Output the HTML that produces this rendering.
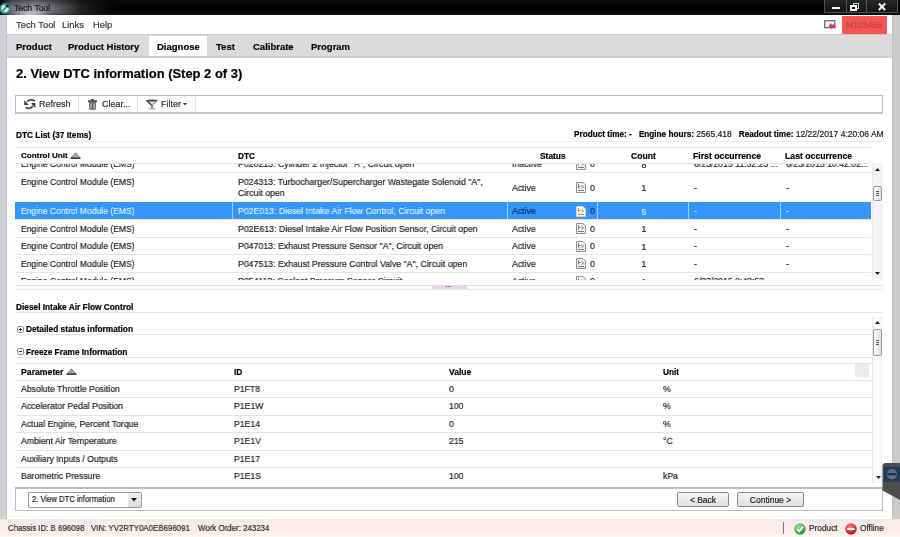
<!DOCTYPE html>
<html><head><meta charset="utf-8">
<style>
*{margin:0;padding:0;box-sizing:border-box}
html,body{width:900px;height:537px;overflow:hidden;background:#fff;font-family:"Liberation Sans",sans-serif;color:#222}
.a{position:absolute}
.t{position:absolute;white-space:nowrap;line-height:1;will-change:transform;-webkit-text-stroke:0.2px currentColor}
svg{position:absolute;overflow:visible}
</style></head><body>
<div class="a" style="left:0px;top:0px;width:900px;height:15px;background:linear-gradient(#0c0c0c,#000 60%,#111)"></div>
<div class="a" style="left:0px;top:0px;width:115px;height:15px;background:linear-gradient(90deg,rgba(0,0,0,0) 0,rgba(125,125,130,.9) 10%,rgba(160,160,165,.95) 30%,rgba(120,120,125,.85) 47%,rgba(50,50,50,.55) 72%,rgba(0,0,0,0) 100%)"></div>
<div class="a" style="left:0px;top:0px;width:115px;height:15px;background:linear-gradient(rgba(0,0,0,.45),rgba(0,0,0,0) 45%,rgba(0,0,0,0) 80%,rgba(0,0,0,.3))"></div>
<div class="a" style="left:10px;top:8px;width:40px;height:7px;background:radial-gradient(ellipse 20px 5px at 20px 6px,rgba(220,230,255,.7),rgba(0,0,0,0))"></div>
<div class="t" style="left:13.5px;top:3.72px;font-size:8.6px;color:#161616;">Tech Tool</div>
<svg style="left:0;top:1.5px" width="12" height="13" viewBox="0 0 12 13"><circle cx="5" cy="6.5" r="5.6" fill="#2a8d86"/><circle cx="5" cy="6.5" r="3.8" fill="#cfeeea"/><path d="M2 9.5 L7 4" stroke="#2a8d86" stroke-width="1.6"/><path d="M5 3 L8.5 3 L8.5 6.5 Z" fill="#0a1515"/></svg>
<div class="a" style="left:824px;top:0px;width:74px;height:13px;background:linear-gradient(#262626,#151515);border:1px solid #505050;border-top:none"></div>
<div class="a" style="left:845.5px;top:0px;width:1px;height:12px;background:#555"></div>
<div class="a" style="left:865.5px;top:0px;width:1px;height:12px;background:#555"></div>
<div class="a" style="left:832px;top:6.5px;width:8px;height:2.5px;background:#f2f2f2"></div>
<div class="a" style="left:852.5px;top:2.5px;width:6px;height:6px;border:1.2px solid #d8d8d8"></div>
<div class="a" style="left:850px;top:4.5px;width:6.5px;height:6px;background:#f4f4f4"></div>
<div class="a" style="left:852px;top:6.5px;width:2.5px;height:2px;background:#111"></div>
<svg style="left:877.5px;top:2.5px" width="8" height="7.5" viewBox="0 0 8 7.5"><path d="M0.8 0.5 L7.2 7 M7.2 0.5 L0.8 7" stroke="#f2f2f2" stroke-width="2"/></svg>
<div class="a" style="left:0px;top:15px;width:7px;height:504px;background:linear-gradient(90deg,#cbd0d4,#cfd1d3 70%);border-right:1px solid #c6c4c4"></div>
<div class="a" style="left:892px;top:15px;width:8px;height:504px;background:#cbcbcb;border-left:1px solid #c0c0c0"></div>
<div class="t" style="left:15.5px;top:20.34px;font-size:9.4px;color:#3a3a3a;">Tech Tool</div>
<div class="t" style="left:62px;top:20.34px;font-size:9.4px;color:#3a3a3a;">Links</div>
<div class="t" style="left:93px;top:20.34px;font-size:9.4px;color:#3a3a3a;">Help</div>
<svg style="left:824px;top:20px" width="13" height="10" viewBox="0 0 13 10"><rect x="0.7" y="0.7" width="10" height="7" fill="#f4f6f4" stroke="#6e7470" stroke-width="1.3"/><path d="M4.5 6 L7.5 3 L7.5 4.5 L11.5 4.5 L11.5 8 L7.5 8 L7.5 9.5 Z" fill="#d63a4a"/></svg>
<div class="a" style="left:842px;top:16px;width:45px;height:18px;background:#f65555"></div>
<div class="t" style="left:846px;top:21.22px;font-size:8.6px;color:#b84444;">M123456</div>
<div class="a" style="left:7px;top:33.8px;width:885px;height:24px;background:#dbdbdb;border-top:1.5px solid #c8c8c8;border-bottom:2px solid #d3d3d3"></div>
<div class="a" style="left:149px;top:35.8px;width:58px;height:20.4px;background:#fff"></div>
<div class="t" style="left:15.5px;top:41.96px;font-size:9.5px;font-weight:bold;color:#050505;">Product</div>
<div class="t" style="left:67.5px;top:41.96px;font-size:9.5px;font-weight:bold;color:#050505;">Product History</div>
<div class="t" style="left:157px;top:41.96px;font-size:9.5px;font-weight:bold;color:#050505;">Diagnose</div>
<div class="t" style="left:216px;top:41.96px;font-size:9.5px;font-weight:bold;color:#050505;">Test</div>
<div class="t" style="left:252.5px;top:41.96px;font-size:9.5px;font-weight:bold;color:#050505;">Calibrate</div>
<div class="t" style="left:311px;top:41.96px;font-size:9.5px;font-weight:bold;color:#050505;">Program</div>
<div class="t" style="left:15.5px;top:68.04px;font-size:12.95px;font-weight:bold;color:#050505;">2. View DTC information (Step 2 of 3)</div>
<div class="a" style="left:15px;top:95px;width:868px;height:19px;border:1px solid #bdbdbd;border-bottom:2px solid #c6c6c6"></div>
<div class="a" style="left:78px;top:96px;width:1px;height:16px;background:#e6e6e6"></div>
<div class="a" style="left:137px;top:96px;width:1px;height:16px;background:#e6e6e6"></div>
<div class="a" style="left:195px;top:96px;width:1px;height:16px;background:#e6e6e6"></div>
<div class="t" style="left:39px;top:99.88px;font-size:9px;color:#333;">Refresh</div>
<div class="t" style="left:102px;top:99.88px;font-size:9px;color:#333;">Clear...</div>
<div class="t" style="left:160.5px;top:99.88px;font-size:9px;color:#333;">Filter</div>
<svg style="left:23px;top:98px" width="14" height="12" viewBox="0 0 14 12"><path d="M4 3.6 Q7.5 0.6 11.8 3" stroke="#444" stroke-width="1.7" fill="none"/><path d="M1.2 2.2 L1.2 7 L5.8 7 Z" fill="#3a3a3a"/><path d="M2.6 9.3 Q6.5 11.8 10 8.2" stroke="#444" stroke-width="1.7" fill="none"/><path d="M8 5 L12.3 5 L12.3 10 Z" fill="#3a3a3a"/></svg>
<svg style="left:88px;top:99px" width="9" height="11" viewBox="0 0 9 11"><rect x="3" y="0" width="3" height="1.5" fill="#555"/><rect x="0" y="1.3" width="9" height="2" rx="0.5" fill="#4a4a4a"/><path d="M1 3.3 H8 L7.7 10.7 H1.3 Z" fill="#5c5c5c"/><rect x="2.3" y="4.3" width="1.3" height="5.3" fill="#c4c4c4"/><rect x="5.4" y="4.3" width="1.3" height="5.3" fill="#c4c4c4"/></svg>
<svg style="left:146px;top:99px" width="12" height="11" viewBox="0 0 12 11"><path d="M0.5 1.5 L5.4 6 V9.5 H6.6 V6 L11.5 1.5 Z" fill="#d4d4d4" stroke="#6a6a6a" stroke-width="0.8"/><path d="M0.5 1.5 L5.4 6" stroke="#3a3a3a" stroke-width="1.3"/><ellipse cx="6" cy="1.5" rx="5.3" ry="1.1" fill="#4a4a4a"/><rect x="2.5" y="9.3" width="7" height="1.2" fill="#b0b0b0"/></svg>
<svg style="left:182.5px;top:102.5px" width="4" height="3" viewBox="0 0 4 3"><path d="M0 0 H4 L2 2.5 Z" fill="#333"/></svg>
<div class="t" style="left:16px;top:130.67px;font-size:8.3px;font-weight:bold;color:#050505;">DTC List (37 Items)</div>
<div class="t" style="right:16.5px;top:129.5px;font-size:8.5px;color:#222;word-spacing:0"><b style="font-size:8.2px;color:#050505">Product time: -</b>&nbsp;&nbsp;&nbsp;<b style="font-size:8.2px;color:#050505">Engine hours:</b> 2565.418&nbsp;&nbsp;&nbsp;<b style="font-size:8.2px;color:#050505">Readout time:</b> 12/22/2017 4:20:06 AM</div>
<div class="a" style="left:16px;top:141px;width:867px;height:1px;background:#ececec"></div>
<div class="a" style="left:16px;top:147px;width:855px;height:1px;background:#e2e2e2"></div>
<div class="t" style="left:20.5px;top:152.14px;font-size:8.1px;font-weight:bold;color:#050505;">Control Unit</div>
<div class="t" style="left:238px;top:151.97px;font-size:8.3px;font-weight:bold;color:#050505;">DTC</div>
<div class="t" style="left:539.5px;top:151.89px;font-size:8.4px;font-weight:bold;color:#050505;">Status</div>
<div class="t" style="left:630.5px;top:151.72px;font-size:8.6px;font-weight:bold;color:#050505;">Count</div>
<div class="t" style="left:693px;top:151.64px;font-size:8.7px;font-weight:bold;color:#050505;">First occurrence</div>
<div class="t" style="left:785px;top:151.64px;font-size:8.7px;font-weight:bold;color:#050505;">Last occurrence</div>
<svg style="left:69.5px;top:152px" width="11" height="7" viewBox="0 0 11 7"><path d="M1 6 L5.5 0.8 L10 6 Z" fill="#a8a8a8" stroke="#6a6a6a" stroke-width="0.8"/><path d="M0.5 6.2 H10.5" stroke="#222" stroke-width="1.2"/></svg>
<div class="a" style="left:0;top:163px;width:871px;height:117px;overflow:hidden">
<div class="a" style="left:15px;top:9px;width:856px;height:1px;background:#e6e6e6"></div>
<div class="a" style="left:15px;top:39px;width:856px;height:1px;background:#e6e6e6"></div>
<div class="a" style="left:15px;top:56px;width:856px;height:1px;background:#e6e6e6"></div>
<div class="a" style="left:15px;top:74px;width:856px;height:1px;background:#e6e6e6"></div>
<div class="a" style="left:15px;top:91px;width:856px;height:1px;background:#e6e6e6"></div>
<div class="a" style="left:15px;top:109px;width:856px;height:1px;background:#e6e6e6"></div>
<div class="a" style="left:15px;top:39px;width:856px;height:17px;background:#3596f8"></div>
<div class="a" style="left:232px;top:39px;width:1px;height:17px;background:#a6cdf5"></div>
<div class="a" style="left:507px;top:39px;width:1px;height:17px;background:#a6cdf5"></div>
<div class="a" style="left:597px;top:39px;width:1px;height:17px;background:#a6cdf5"></div>
<div class="a" style="left:688px;top:39px;width:1px;height:17px;background:#a6cdf5"></div>
<div class="a" style="left:780px;top:39px;width:1px;height:17px;background:#a6cdf5"></div>
<div class="t" style="left:20.5px;top:-2.87px;font-size:9.3px;color:#222;transform:scaleX(0.9194);transform-origin:0 0;">Engine Control Module (EMS)</div>
<div class="t" style="left:238px;top:-2.87px;font-size:9.3px;color:#222;transform:scaleX(0.9409);transform-origin:0 0;">P020213: Cylinder 2 Injector "A", Circuit open</div>
<div class="t" style="left:512px;top:-2.87px;font-size:9.3px;color:#222;transform:scaleX(0.9355);transform-origin:0 0;">Inactive</div>
<svg style="left:576px;top:-4.5px" width="10" height="11" viewBox="0 0 10 11"><path d="M0.5 0.5 H7 L9.5 3 V10.5 H0.5 Z" fill="#f4f4f4" stroke="#8e8e8e"/><path d="M2.5 2 V6.5 M2.5 4.5 H4.5 M5.5 3.5 L7.5 5 L5.5 6.5 M2 8.5 H8" stroke="#7a7a7a" stroke-width="1" fill="none"/></svg>
<div class="t" style="left:590px;top:-2.87px;font-size:9.3px;color:#222;transform:scaleX(0.9355);transform-origin:0 0;">0</div>
<div class="t" style="left:624px;width:40px;text-align:center;top:-2.36px;font-size:8.7px;color:#222">8</div>
<div class="t" style="left:694px;top:-2.87px;font-size:9.3px;color:#222;transform:scaleX(0.9355);transform-origin:0 0;">6/23/2015 11:52:23 ...</div>
<div class="t" style="left:786px;top:-2.87px;font-size:9.3px;color:#222;transform:scaleX(0.9355);transform-origin:0 0;">6/23/2015 10:42:02...</div>
<div class="t" style="left:20.5px;top:14.93px;font-size:9.3px;color:#222;transform:scaleX(0.9194);transform-origin:0 0;">Engine Control Module (EMS)</div>
<div class="t" style="left:238px;top:14.93px;font-size:9.3px;color:#222;transform:scaleX(0.9409);transform-origin:0 0;">P024313: Turbocharger/Supercharger Wastegate Solenoid "A",</div>
<div class="t" style="left:238px;top:25.93px;font-size:9.3px;color:#222;transform:scaleX(0.9409);transform-origin:0 0;">Circuit open</div>
<div class="t" style="left:512px;top:20.93px;font-size:9.3px;color:#222;transform:scaleX(0.9355);transform-origin:0 0;">Active</div>
<svg style="left:576px;top:19.30000000000001px" width="10" height="11" viewBox="0 0 10 11"><path d="M0.5 0.5 H7 L9.5 3 V10.5 H0.5 Z" fill="#f4f4f4" stroke="#8e8e8e"/><path d="M2.5 2 V6.5 M2.5 4.5 H4.5 M5.5 3.5 L7.5 5 L5.5 6.5 M2 8.5 H8" stroke="#7a7a7a" stroke-width="1" fill="none"/></svg>
<div class="t" style="left:590px;top:20.93px;font-size:9.3px;color:#222;transform:scaleX(0.9355);transform-origin:0 0;">0</div>
<div class="t" style="left:624px;width:40px;text-align:center;top:21.44px;font-size:8.7px;color:#222">1</div>
<div class="t" style="left:694px;top:20.93px;font-size:9.3px;color:#222;transform:scaleX(0.9355);transform-origin:0 0;">-</div>
<div class="t" style="left:786px;top:20.93px;font-size:9.3px;color:#222;transform:scaleX(0.9355);transform-origin:0 0;">-</div>
<div class="t" style="left:20.5px;top:44.13px;font-size:9.3px;color:#d6e9ff;transform:scaleX(0.9194);transform-origin:0 0;">Engine Control Module (EMS)</div>
<div class="t" style="left:238px;top:44.13px;font-size:9.3px;color:#d6e9ff;transform:scaleX(0.9409);transform-origin:0 0;">P02E013: Diesel Intake Air Flow Control, Circuit open</div>
<div class="t" style="left:512px;top:44.13px;font-size:9.3px;color:#0b2c6e;transform:scaleX(0.9355);transform-origin:0 0;">Active</div>
<svg style="left:576px;top:42.5px" width="10" height="11" viewBox="0 0 10 11"><path d="M0.5 0.5 H7 L9.5 3 V10.5 H0.5 Z" fill="#fbfbfb" stroke="#d0d0d0"/><path d="M2.5 2 V6.5 M2.5 4.5 H4.5 M5.5 3.5 L7.5 5 L5.5 6.5 M2 8.5 H8" stroke="#d08a50" stroke-width="1" fill="none"/></svg>
<div class="t" style="left:590px;top:44.13px;font-size:9.3px;color:#0b2c6e;transform:scaleX(0.9355);transform-origin:0 0;">0</div>
<div class="t" style="left:624px;width:40px;text-align:center;top:44.64px;font-size:8.7px;color:#d6e9ff">5</div>
<div class="t" style="left:694px;top:44.13px;font-size:9.3px;color:#d6e9ff;transform:scaleX(0.9355);transform-origin:0 0;">-</div>
<div class="t" style="left:786px;top:44.13px;font-size:9.3px;color:#d6e9ff;transform:scaleX(0.9355);transform-origin:0 0;">-</div>
<div class="t" style="left:20.5px;top:61.63px;font-size:9.3px;color:#222;transform:scaleX(0.9194);transform-origin:0 0;">Engine Control Module (EMS)</div>
<div class="t" style="left:238px;top:61.63px;font-size:9.3px;color:#222;transform:scaleX(0.9409);transform-origin:0 0;">P02E613: Diesel Intake Air Flow Position Sensor, Circuit open</div>
<div class="t" style="left:512px;top:61.63px;font-size:9.3px;color:#222;transform:scaleX(0.9355);transform-origin:0 0;">Active</div>
<svg style="left:576px;top:60.0px" width="10" height="11" viewBox="0 0 10 11"><path d="M0.5 0.5 H7 L9.5 3 V10.5 H0.5 Z" fill="#f4f4f4" stroke="#8e8e8e"/><path d="M2.5 2 V6.5 M2.5 4.5 H4.5 M5.5 3.5 L7.5 5 L5.5 6.5 M2 8.5 H8" stroke="#7a7a7a" stroke-width="1" fill="none"/></svg>
<div class="t" style="left:590px;top:61.63px;font-size:9.3px;color:#222;transform:scaleX(0.9355);transform-origin:0 0;">0</div>
<div class="t" style="left:624px;width:40px;text-align:center;top:62.14px;font-size:8.7px;color:#222">1</div>
<div class="t" style="left:694px;top:61.63px;font-size:9.3px;color:#222;transform:scaleX(0.9355);transform-origin:0 0;">-</div>
<div class="t" style="left:786px;top:61.63px;font-size:9.3px;color:#222;transform:scaleX(0.9355);transform-origin:0 0;">-</div>
<div class="t" style="left:20.5px;top:79.23px;font-size:9.3px;color:#222;transform:scaleX(0.9194);transform-origin:0 0;">Engine Control Module (EMS)</div>
<div class="t" style="left:238px;top:79.23px;font-size:9.3px;color:#222;transform:scaleX(0.9409);transform-origin:0 0;">P047013: Exhaust Pressure Sensor "A", Circuit open</div>
<div class="t" style="left:512px;top:79.23px;font-size:9.3px;color:#222;transform:scaleX(0.9355);transform-origin:0 0;">Active</div>
<svg style="left:576px;top:77.6px" width="10" height="11" viewBox="0 0 10 11"><path d="M0.5 0.5 H7 L9.5 3 V10.5 H0.5 Z" fill="#f4f4f4" stroke="#8e8e8e"/><path d="M2.5 2 V6.5 M2.5 4.5 H4.5 M5.5 3.5 L7.5 5 L5.5 6.5 M2 8.5 H8" stroke="#7a7a7a" stroke-width="1" fill="none"/></svg>
<div class="t" style="left:590px;top:79.23px;font-size:9.3px;color:#222;transform:scaleX(0.9355);transform-origin:0 0;">0</div>
<div class="t" style="left:624px;width:40px;text-align:center;top:79.74px;font-size:8.7px;color:#222">1</div>
<div class="t" style="left:694px;top:79.23px;font-size:9.3px;color:#222;transform:scaleX(0.9355);transform-origin:0 0;">-</div>
<div class="t" style="left:786px;top:79.23px;font-size:9.3px;color:#222;transform:scaleX(0.9355);transform-origin:0 0;">-</div>
<div class="t" style="left:20.5px;top:96.83px;font-size:9.3px;color:#222;transform:scaleX(0.9194);transform-origin:0 0;">Engine Control Module (EMS)</div>
<div class="t" style="left:238px;top:96.83px;font-size:9.3px;color:#222;transform:scaleX(0.9409);transform-origin:0 0;">P047513: Exhaust Pressure Control Valve "A", Circuit open</div>
<div class="t" style="left:512px;top:96.83px;font-size:9.3px;color:#222;transform:scaleX(0.9355);transform-origin:0 0;">Active</div>
<svg style="left:576px;top:95.19999999999999px" width="10" height="11" viewBox="0 0 10 11"><path d="M0.5 0.5 H7 L9.5 3 V10.5 H0.5 Z" fill="#f4f4f4" stroke="#8e8e8e"/><path d="M2.5 2 V6.5 M2.5 4.5 H4.5 M5.5 3.5 L7.5 5 L5.5 6.5 M2 8.5 H8" stroke="#7a7a7a" stroke-width="1" fill="none"/></svg>
<div class="t" style="left:590px;top:96.83px;font-size:9.3px;color:#222;transform:scaleX(0.9355);transform-origin:0 0;">0</div>
<div class="t" style="left:624px;width:40px;text-align:center;top:97.34px;font-size:8.7px;color:#222">1</div>
<div class="t" style="left:694px;top:96.83px;font-size:9.3px;color:#222;transform:scaleX(0.9355);transform-origin:0 0;">-</div>
<div class="t" style="left:786px;top:96.83px;font-size:9.3px;color:#222;transform:scaleX(0.9355);transform-origin:0 0;">-</div>
<div class="t" style="left:20.5px;top:114.43px;font-size:9.3px;color:#222;transform:scaleX(0.9194);transform-origin:0 0;">Engine Control Module (EMS)</div>
<div class="t" style="left:238px;top:114.43px;font-size:9.3px;color:#222;transform:scaleX(0.9409);transform-origin:0 0;">P054113: Coolant Pressure Sensor Circuit</div>
<div class="t" style="left:512px;top:114.43px;font-size:9.3px;color:#222;transform:scaleX(0.9355);transform-origin:0 0;">Active</div>
<svg style="left:576px;top:112.80000000000001px" width="10" height="11" viewBox="0 0 10 11"><path d="M0.5 0.5 H7 L9.5 3 V10.5 H0.5 Z" fill="#f4f4f4" stroke="#8e8e8e"/><path d="M2.5 2 V6.5 M2.5 4.5 H4.5 M5.5 3.5 L7.5 5 L5.5 6.5 M2 8.5 H8" stroke="#7a7a7a" stroke-width="1" fill="none"/></svg>
<div class="t" style="left:590px;top:114.43px;font-size:9.3px;color:#222;transform:scaleX(0.9355);transform-origin:0 0;">0</div>
<div class="t" style="left:624px;width:40px;text-align:center;top:114.94px;font-size:8.7px;color:#222">1</div>
<div class="t" style="left:694px;top:114.43px;font-size:9.3px;color:#222;transform:scaleX(0.9355);transform-origin:0 0;">6/23/2015 9:42:53</div>
<div class="t" style="left:786px;top:114.43px;font-size:9.3px;color:#222;transform:scaleX(0.9355);transform-origin:0 0;"></div>
</div>
<div class="a" style="left:15px;top:162.5px;width:856px;height:1.5px;background:#fff"></div>
<div class="a" style="left:15px;top:163px;width:856px;height:1px;background:#e2e2e2"></div>
<div class="a" style="left:872px;top:163px;width:11px;height:117px;background:#f4f4f4;border-left:1px solid #e8e8e8"></div>
<svg style="left:875px;top:168px" width="5" height="3" viewBox="0 0 5 3"><path d="M0 3 L2.5 0 L5 3 Z" fill="#222"/></svg>
<div class="a" style="left:873px;top:186px;width:9px;height:15px;background:linear-gradient(90deg,#fafafa,#e0e0e0);border:1px solid #999;border-radius:2px"></div>
<div class="a" style="left:876px;top:191px;width:3px;height:1px;background:#555;box-shadow:0 2px 0 #555,0 4px 0 #555"></div>
<svg style="left:875px;top:272px" width="5" height="3" viewBox="0 0 5 3"><path d="M0 0 L2.5 3 L5 0 Z" fill="#222"/></svg>
<div class="a" style="left:15px;top:285px;width:868px;height:1px;background:#e2e2e2"></div>
<div class="a" style="left:15px;top:289px;width:868px;height:1px;background:#e8e8e8"></div>
<div class="a" style="left:432px;top:285px;width:35px;height:4px;background:#e6d6ea"></div>
<div class="a" style="left:446px;top:286px;width:1px;height:1px;background:#555;box-shadow:2px 0 0 #555,4px 0 0 #555"></div>
<div class="t" style="left:16px;top:303.27px;font-size:8.3px;font-weight:bold;color:#050505;">Diesel Intake Air Flow Control</div>
<div class="a" style="left:15px;top:312px;width:868px;height:1px;background:#e6e6e6"></div>
<div class="a" style="left:15px;top:334px;width:868px;height:1px;background:#e6e6e6"></div>
<div class="a" style="left:15px;top:357px;width:857px;height:1px;background:#e6e6e6"></div>
<div class="a" style="left:15px;top:363px;width:857px;height:1px;background:#e2e2e2"></div>
<svg style="left:16.5px;top:325.5px" width="7" height="7" viewBox="0 0 7 7"><rect x="0.5" y="0.5" width="6" height="6" rx="1.2" fill="#f8f8f8" stroke="#8a8a8a"/><path d="M2 3.5 H5" stroke="#333"/><path d="M3.5 2 V5" stroke="#333"/></svg>
<div class="t" style="left:25.5px;top:325.17px;font-size:8.3px;font-weight:bold;color:#050505;">Detailed status information</div>
<svg style="left:16.5px;top:348px" width="7" height="7" viewBox="0 0 7 7"><rect x="0.5" y="0.5" width="6" height="6" rx="1.2" fill="#f8f8f8" stroke="#8a8a8a"/><path d="M2 3.5 H5" stroke="#333"/></svg>
<div class="t" style="left:25.5px;top:347.57px;font-size:8.3px;font-weight:bold;color:#050505;">Freeze Frame Information</div>
<div class="t" style="left:20.5px;top:367.64px;font-size:8.7px;font-weight:bold;color:#050505;">Parameter</div>
<div class="t" style="left:234px;top:367.97px;font-size:8.3px;font-weight:bold;color:#050505;">ID</div>
<div class="t" style="left:449px;top:367.8px;font-size:8.5px;font-weight:bold;color:#050505;">Value</div>
<div class="t" style="left:663px;top:367.97px;font-size:8.3px;font-weight:bold;color:#050505;">Unit</div>
<svg style="left:66px;top:368px" width="11" height="7" viewBox="0 0 11 7"><path d="M1 6 L5.5 0.8 L10 6 Z" fill="#a8a8a8" stroke="#6a6a6a" stroke-width="0.8"/><path d="M0.5 6.2 H10.5" stroke="#222" stroke-width="1.2"/></svg>
<div class="a" style="left:855px;top:364px;width:14px;height:13px;background:#ebebeb"></div>
<div class="a" style="left:15px;top:380px;width:857px;height:1px;background:#e4e4e4"></div>
<div class="a" style="left:15px;top:397px;width:857px;height:1px;background:#e4e4e4"></div>
<div class="a" style="left:15px;top:415px;width:857px;height:1px;background:#e4e4e4"></div>
<div class="a" style="left:15px;top:432px;width:857px;height:1px;background:#e4e4e4"></div>
<div class="a" style="left:15px;top:450px;width:857px;height:1px;background:#e4e4e4"></div>
<div class="a" style="left:15px;top:467px;width:857px;height:1px;background:#e4e4e4"></div>
<div class="t" style="left:20.5px;top:384.73px;font-size:9.3px;color:#222;transform:scaleX(0.9355);transform-origin:0 0;">Absolute Throttle Position</div>
<div class="t" style="left:234px;top:384.73px;font-size:9.3px;color:#222;transform:scaleX(0.9355);transform-origin:0 0;">P1FT8</div>
<div class="t" style="left:449px;top:384.73px;font-size:9.3px;color:#222;transform:scaleX(0.9355);transform-origin:0 0;">0</div>
<div class="t" style="left:663px;top:384.73px;font-size:9.3px;color:#222;transform:scaleX(0.9355);transform-origin:0 0;">%</div>
<div class="t" style="left:20.5px;top:402.28px;font-size:9.3px;color:#222;transform:scaleX(0.9355);transform-origin:0 0;">Accelerator Pedal Position</div>
<div class="t" style="left:234px;top:402.28px;font-size:9.3px;color:#222;transform:scaleX(0.9355);transform-origin:0 0;">P1E1W</div>
<div class="t" style="left:449px;top:402.28px;font-size:9.3px;color:#222;transform:scaleX(0.9355);transform-origin:0 0;">100</div>
<div class="t" style="left:663px;top:402.28px;font-size:9.3px;color:#222;transform:scaleX(0.9355);transform-origin:0 0;">%</div>
<div class="t" style="left:20.5px;top:419.83px;font-size:9.3px;color:#222;transform:scaleX(0.9355);transform-origin:0 0;">Actual Engine, Percent Torque</div>
<div class="t" style="left:234px;top:419.83px;font-size:9.3px;color:#222;transform:scaleX(0.9355);transform-origin:0 0;">P1E14</div>
<div class="t" style="left:449px;top:419.83px;font-size:9.3px;color:#222;transform:scaleX(0.9355);transform-origin:0 0;">0</div>
<div class="t" style="left:663px;top:419.83px;font-size:9.3px;color:#222;transform:scaleX(0.9355);transform-origin:0 0;">%</div>
<div class="t" style="left:20.5px;top:437.38px;font-size:9.3px;color:#222;transform:scaleX(0.9355);transform-origin:0 0;">Ambient Air Temperature</div>
<div class="t" style="left:234px;top:437.38px;font-size:9.3px;color:#222;transform:scaleX(0.9355);transform-origin:0 0;">P1E1V</div>
<div class="t" style="left:449px;top:437.38px;font-size:9.3px;color:#222;transform:scaleX(0.9355);transform-origin:0 0;">215</div>
<div class="t" style="left:663px;top:437.38px;font-size:9.3px;color:#222;transform:scaleX(0.9355);transform-origin:0 0;">&deg;C</div>
<div class="t" style="left:20.5px;top:454.93px;font-size:9.3px;color:#222;transform:scaleX(0.9355);transform-origin:0 0;">Auxiliary Inputs / Outputs</div>
<div class="t" style="left:234px;top:454.93px;font-size:9.3px;color:#222;transform:scaleX(0.9355);transform-origin:0 0;">P1E17</div>
<div class="t" style="left:449px;top:454.93px;font-size:9.3px;color:#222;transform:scaleX(0.9355);transform-origin:0 0;"></div>
<div class="t" style="left:663px;top:454.93px;font-size:9.3px;color:#222;transform:scaleX(0.9355);transform-origin:0 0;"></div>
<div class="t" style="left:20.5px;top:472.48px;font-size:9.3px;color:#222;transform:scaleX(0.9355);transform-origin:0 0;">Barometric Pressure</div>
<div class="t" style="left:234px;top:472.48px;font-size:9.3px;color:#222;transform:scaleX(0.9355);transform-origin:0 0;">P1E1S</div>
<div class="t" style="left:449px;top:472.48px;font-size:9.3px;color:#222;transform:scaleX(0.9355);transform-origin:0 0;">100</div>
<div class="t" style="left:663px;top:472.48px;font-size:9.3px;color:#222;transform:scaleX(0.9355);transform-origin:0 0;">kPa</div>
<div class="a" style="left:872px;top:317px;width:10px;height:166px;background:#fafafa;border-left:1px solid #e6e6e6;border-right:1px solid #ececec"></div>
<svg style="left:875px;top:321px" width="5" height="3" viewBox="0 0 5 3"><path d="M0 3 L2.5 0 L5 3 Z" fill="#222"/></svg>
<div class="a" style="left:873px;top:329px;width:9px;height:27px;background:linear-gradient(90deg,#fafafa,#dedede);border:1px solid #999;border-radius:2px"></div>
<div class="a" style="left:876px;top:340px;width:3px;height:1px;background:#555;box-shadow:0 2px 0 #555,0 4px 0 #555"></div>
<svg style="left:875.5px;top:475.5px" width="5" height="3" viewBox="0 0 5 3"><path d="M0 0 L2.5 3 L5 0 Z" fill="#222"/></svg>
<div class="a" style="left:15px;top:487px;width:868px;height:24px;border:1px solid #bdbdbd;border-top:2px solid #c0c0c0"></div>
<div class="a" style="left:27.5px;top:491.5px;width:114px;height:16.5px;background:#fff;border:1px solid #9a9a9a;border-radius:2px"></div>
<div class="a" style="left:127.5px;top:492.5px;width:13px;height:14.5px;background:linear-gradient(#f0f0f0,#dcdcdc)"></div>
<svg style="left:131px;top:498px" width="6" height="4" viewBox="0 0 6 4"><path d="M0 0 H6 L3 3.5 Z" fill="#111"/></svg>
<div class="t" style="left:32px;top:494.8px;font-size:8.5px;color:#1a1a1a;transform:scaleX(0.9);transform-origin:0 0;">2. View DTC information</div>
<div class="a" style="left:676.5px;top:492px;width:52px;height:15px;background:linear-gradient(#f6f6f6,#dedede);border:1px solid #8a8a8a;border-radius:2px"></div>
<div class="a" style="left:736.5px;top:492px;width:67px;height:15px;background:linear-gradient(#f6f6f6,#dedede);border:1px solid #8a8a8a;border-radius:2px"></div>
<div class="t" style="left:676.5px;width:52px;text-align:center;top:495.8px;font-size:8.5px;color:#222">&lt; Back</div>
<div class="t" style="left:736.5px;width:67px;text-align:center;top:495.8px;font-size:8.5px;color:#222">Continue &gt;</div>
<div class="a" style="left:0px;top:519px;width:900px;height:18px;background:linear-gradient(#efe5e5 0,#fcecec 18%,#fdeaea 60%,#fbf1f1 88%,#fdfafa 100%)"></div>
<div class="t" style="left:7.5px;top:523.67px;font-size:8.9px;color:#2a2a2a;transform:scaleX(0.89);transform-origin:0 0;">Chassis ID: B 696098</div>
<div class="t" style="left:91px;top:523.67px;font-size:8.9px;color:#2a2a2a;transform:scaleX(0.89);transform-origin:0 0;">VIN: YV2RTY0A0EB696091</div>
<div class="t" style="left:197.5px;top:523.67px;font-size:8.9px;color:#2a2a2a;transform:scaleX(0.89);transform-origin:0 0;">Work Order: 243234</div>
<div class="a" style="left:783px;top:522px;width:1px;height:12px;background:#777"></div>
<svg style="left:793.5px;top:522.5px" width="12" height="12" viewBox="0 0 12 12"><defs><radialGradient id="gg" cx="0.4" cy="0.3" r="0.7"><stop offset="0" stop-color="#9be38a"/><stop offset="1" stop-color="#23912a"/></radialGradient></defs><circle cx="6" cy="6" r="5.7" fill="url(#gg)"/><path d="M2.8 6 L5 8.4 L9.2 3.6" stroke="#fff" stroke-width="1.7" fill="none"/></svg>
<div class="t" style="left:808.5px;top:524.47px;font-size:8.3px;color:#2a2a2a;">Product</div>
<svg style="left:844.5px;top:522.5px" width="12" height="12" viewBox="0 0 12 12"><defs><radialGradient id="rg" cx="0.4" cy="0.3" r="0.7"><stop offset="0" stop-color="#ff7a7a"/><stop offset="1" stop-color="#b80f0f"/></radialGradient></defs><circle cx="6" cy="6" r="5.7" fill="url(#rg)"/><rect x="2.3" y="4.9" width="7.4" height="2.2" fill="#fff"/></svg>
<div class="t" style="left:859.5px;top:524.47px;font-size:8.3px;color:#2a2a2a;">Offline</div>
<svg style="left:882px;top:463px" width="18" height="37" viewBox="0 0 18 37"><path d="M0.5 3 Q0.5 0 3.5 0 H18 V37 L0.5 27.5 Z" fill="#4d4d4d"/><rect x="2" y="4" width="16" height="14.5" fill="#1d3a58"/><circle cx="10" cy="11.2" r="5.6" fill="#5d7286" stroke="#233f5e" stroke-width="1"/><rect x="5.5" y="10.2" width="9" height="2" fill="#1a2e44"/></svg>
</body></html>
